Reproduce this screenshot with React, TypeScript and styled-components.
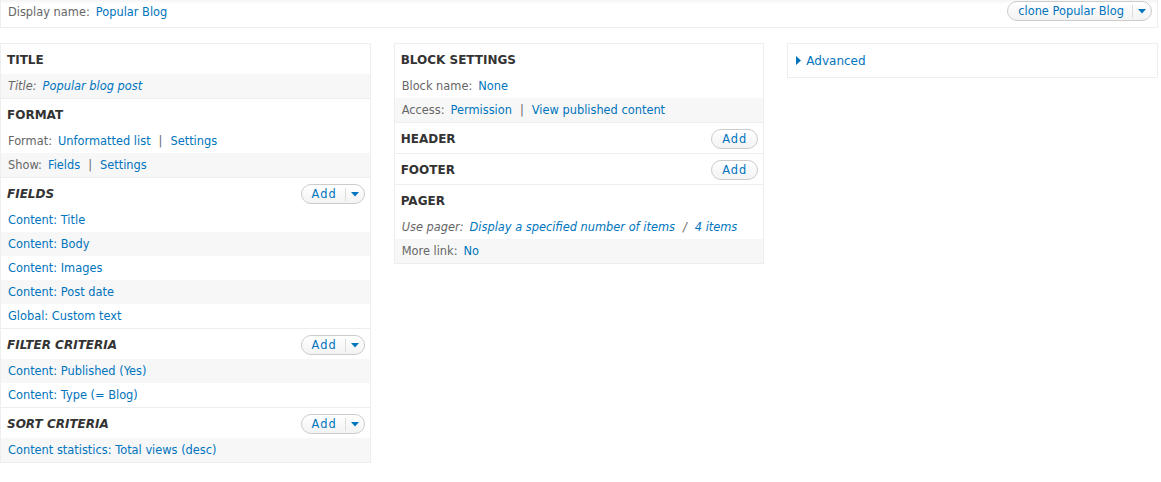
import styled, { createGlobalStyle, css } from "styled-components"

const GlobalStyle = createGlobalStyle`
  body {
    margin: 0;
    background: #fff;
    font-family: "DejaVu Sans", Verdana, sans-serif;
    font-size: 11.4px;
    color: #333;
  }
`

type RowData = { label?: string; italic?: boolean; links: string[]; shade?: boolean; sep?: string }
type Section = { title: string; italic?: boolean; add?: "drop" | "plain"; rows: RowData[] }

const leftColumn: Section[] = [
  { title: "Title", rows: [{ label: "Title:", italic: true, links: ["Popular blog post"], shade: true }] },
  {
    title: "Format",
    rows: [
      { label: "Format:", links: ["Unformatted list", "Settings"] },
      { label: "Show:", links: ["Fields", "Settings"], shade: true },
    ],
  },
  {
    title: "Fields",
    italic: true,
    add: "drop",
    rows: [
      { links: ["Content: Title"] },
      { links: ["Content: Body"], shade: true },
      { links: ["Content: Images"] },
      { links: ["Content: Post date"], shade: true },
      { links: ["Global: Custom text"] },
    ],
  },
  {
    title: "Filter criteria",
    italic: true,
    add: "drop",
    rows: [{ links: ["Content: Published (Yes)"], shade: true }, { links: ["Content: Type (= Blog)"] }],
  },
  {
    title: "Sort criteria",
    italic: true,
    add: "drop",
    rows: [{ links: ["Content statistics: Total views (desc)"], shade: true }],
  },
]

const middleColumn: Section[] = [
  {
    title: "Block settings",
    rows: [
      { label: "Block name:", links: ["None"] },
      { label: "Access:", links: ["Permission", "View published content"], shade: true },
    ],
  },
  { title: "Header", add: "plain", rows: [] },
  { title: "Footer", add: "plain", rows: [] },
  {
    title: "Pager",
    rows: [
      { label: "Use pager:", italic: true, links: ["Display a specified number of items", "4 items"], sep: "/" },
      { label: "More link:", links: ["No"], shade: true },
    ],
  },
]

function Arrow() {
  return (
    <svg width="8" height="5" viewBox="0 0 8 5">
      <path d="M0 0 H8 L4 4.5 Z" fill="#0074bd" />
    </svg>
  )
}

function DropButton({ text, drop, spaced }: { text: string; drop?: boolean; spaced?: boolean }) {
  return (
    <Pill>
      <PillText $spaced={spaced} $drop={drop}>{text}</PillText>
      {drop && (
        <PillToggle>
          <Arrow />
        </PillToggle>
      )}
    </Pill>
  )
}

function Bucket({ sections }: { sections: Section[] }) {
  return (
    <Column>
      {sections.map((s) => (
        <SectionBox key={s.title}>
          <SectionHead>
            <HeadTitle $italic={s.italic}>{s.title}</HeadTitle>
            {s.add && <DropButton text="Add" spaced drop={s.add === "drop"} />}
          </SectionHead>
          {s.rows.map((r, i) => (
            <Row key={i} $shade={r.shade} $italic={r.italic}>
              {r.label && <Label>{r.label}</Label>}
              {r.links.map((l, j) => (
                <span key={l}>
                  {j > 0 && <Sep>{r.sep ?? "|"}</Sep>}
                  <Link>{l}</Link>
                </span>
              ))}
            </Row>
          ))}
        </SectionBox>
      ))}
    </Column>
  )
}

export default function App() {
  return (
    <>
      <GlobalStyle />
      <Page>
        <TopBar>
          <TopName>
            <Label>Display name:</Label>
            <Link>Popular Blog</Link>
          </TopName>
          <DropButton text="clone Popular Blog" drop />
        </TopBar>
        <Columns>
          <Bucket sections={leftColumn} />
          <Bucket sections={middleColumn} />
          <Column>
            <Advanced>
              <svg width="5" height="9" viewBox="0 0 5 9">
                <path d="M0 0 L5 4.5 L0 9 Z" fill="#0074bd" />
              </svg>
              <Link>Advanced</Link>
            </Advanced>
          </Column>
        </Columns>
      </Page>
    </>
  )
}

const Page = styled.div`
  padding-right: 3px;
`

const TopBar = styled.div`
  display: flex;
  align-items: flex-start;
  justify-content: space-between;
  height: 26px;
  padding: 1px 5px 0 7px;
  border: 1px solid #eee;
  border-top: none;
  background: linear-gradient(#f4f4f4, #fff 4px);
`

const TopName = styled.div`
  line-height: 22px;
`

const Columns = styled.div`
  display: flex;
  align-items: flex-start;
  gap: 23px;
  margin-top: 15px;
`

const Column = styled.div`
  flex: 1;
  border: 1px solid #eee;
  min-width: 0;
`

const SectionBox = styled.div`
  & + & {
    border-top: 1px solid #eee;
  }
`

const SectionHead = styled.div`
  box-sizing: border-box;
  display: flex;
  align-items: center;
  justify-content: space-between;
  height: 30px;
  padding: 2px 5px 0 6px;
`

const HeadTitle = styled.h2<{ $italic?: boolean }>`
  margin: 0;
  font-size: 12px;
  font-weight: bold;
  text-transform: uppercase;
  color: #333;
  ${(p) =>
    p.$italic &&
    css`
      font-style: italic;
    `}
`

const Row = styled.div<{ $shade?: boolean; $italic?: boolean }>`
  height: 24px;
  line-height: 24px;
  padding: 0 7px;
  white-space: nowrap;
  background: ${(p) => (p.$shade ? "#f7f7f7" : "#fff")};
  font-style: ${(p) => (p.$italic ? "italic" : "normal")};
`

const Label = styled.span`
  color: #666;
  margin-right: 6px;
`

const Link = styled.a`
  color: #0074bd;
  text-decoration: none;
  cursor: pointer;
`

const Sep = styled.span`
  color: #666;
  margin: 0 8px;
`

const Pill = styled.div`
  display: inline-flex;
  align-items: center;
  height: 18px;
  border: 1px solid #ccc;
  border-radius: 10px;
  background: linear-gradient(#fff, #f3f3f3);
  font-style: normal;
`

const PillText = styled.span<{ $spaced?: boolean; $drop?: boolean }>`
  color: #0074bd;
  letter-spacing: ${(p) => (p.$spaced ? "1px" : "0")};
  padding: ${(p) => (p.$drop ? "0 8px 0 10px" : "0 10px 0 10px")};
  line-height: 18px;
`

const PillToggle = styled.span`
  display: flex;
  align-items: center;
  justify-content: center;
  width: 18px;
  height: 13px;
  border-left: 1px solid #ddd;
`

const Advanced = styled.div`
  display: flex;
  align-items: center;
  gap: 5px;
  height: 33px;
  padding: 0 8px;
  font-size: 12px;
`
